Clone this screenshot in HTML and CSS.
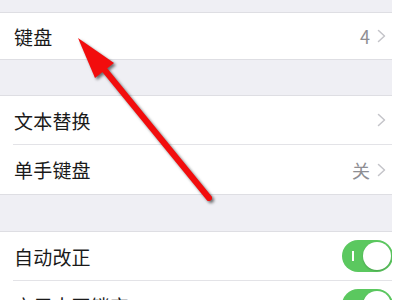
FILE: index.html
```html
<!DOCTYPE html>
<html lang="zh-CN">
<head>
<meta charset="utf-8">
<link rel="stylesheet" href="styles.css">
</head>
<body>
<div class="screen">
  <div class="group group-first">
    <div class="row"><div class="row-inner short"><span class="label">键盘</span><span class="detail">4</span><svg class="chev" viewBox="0 0 9 14" width="9" height="14"><path d="M1.5 1.5 L7.5 7 L1.5 12.5" fill="none" stroke="#c4c4c9" stroke-width="1.5" stroke-linecap="round" stroke-linejoin="round"/></svg></div></div>
  </div>
  <div class="group group-mid">
    <div class="row"><div class="row-inner sep"><span class="label">文本替换</span><svg class="chev" viewBox="0 0 9 14" width="9" height="14"><path d="M1.5 1.5 L7.5 7 L1.5 12.5" fill="none" stroke="#c4c4c9" stroke-width="1.5" stroke-linecap="round" stroke-linejoin="round"/></svg></div></div>
    <div class="row"><div class="row-inner tall"><span class="label">单手键盘</span><span class="detail">关</span><svg class="chev" viewBox="0 0 9 14" width="9" height="14"><path d="M1.5 1.5 L7.5 7 L1.5 12.5" fill="none" stroke="#c4c4c9" stroke-width="1.5" stroke-linecap="round" stroke-linejoin="round"/></svg></div></div>
  </div>
  <div class="group">
    <div class="row"><div class="row-inner sep switch-row"><span class="label">自动改正</span><span class="switch"><span class="mark"></span><span class="knob"></span></span></div></div>
    <div class="row"><div class="row-inner switch-row"><span class="label">启用大写锁定</span><span class="switch"><span class="mark"></span><span class="knob"></span></span></div></div>
  </div>
  <svg class="arrow" viewBox="0 0 400 300" width="400" height="300">
    <g class="arrow-shape">
      <line x1="103" y1="68" x2="209" y2="198" stroke="#f20d0d" stroke-width="6" stroke-linecap="round"/>
      <polygon points="78,38 114,63 95,78" fill="#f20d0d"/>
    </g>
  </svg>
</div>
</body>
</html>
```
FILE: styles.css
```css
html, body {
  margin: 0;
  padding: 0;
  background: #ffffff;
}
.screen {
  position: relative;
  width: 392px;
  height: 300px;
  overflow: hidden;
  background: #efeff4;
  padding-top: 12px;
  box-sizing: border-box;
  font-family: "Noto Sans CJK SC", "Noto Sans", sans-serif;
}
.group {
  background: #ffffff;
  border-top: 1px solid #dedee3;
  border-bottom: 1px solid #dedee3;
  margin-bottom: 36px;
}
.group-first {
  margin-bottom: 35px;
}
.row {
  padding-left: 13px;
}
.row-inner {
  height: 48px;
  display: flex;
  align-items: center;
  padding-left: 1px;
  padding-right: 6px;
  box-sizing: border-box;
}
.row-inner.short {
  height: 46px;
}
.row-inner.tall {
  height: 49px;
}
.row-inner.sep {
  height: 49px;
  border-bottom: 1px solid #e3e3e7;
}
.row-inner.switch-row {
  padding-right: 0;
}
.label {
  flex: 1;
  font-size: 19px;
  color: #1a1a1a;
  letter-spacing: 0.2px;
}
.detail {
  font-size: 18px;
  color: #8e8e93;
  margin-right: 7px;
}
.chev {
  display: block;
}
.switch {
  position: relative;
  width: 51px;
  height: 32px;
  border-radius: 16px;
  background: #5bc85f;
  margin-right: -1px;
  flex: none;
}
.mark {
  position: absolute;
  left: 10px;
  top: 11px;
  width: 1.5px;
  height: 10px;
  background: #ffffff;
}
.knob {
  position: absolute;
  right: 2px;
  top: 2px;
  width: 28px;
  height: 28px;
  border-radius: 50%;
  background: #ffffff;
  box-shadow: 0 1px 2px rgba(0,0,0,0.2);
}
.arrow {
  position: absolute;
  left: 0;
  top: 0;
}
.arrow-shape {
  filter: drop-shadow(2px 2px 1.5px rgba(0,0,0,0.55));
}
```
